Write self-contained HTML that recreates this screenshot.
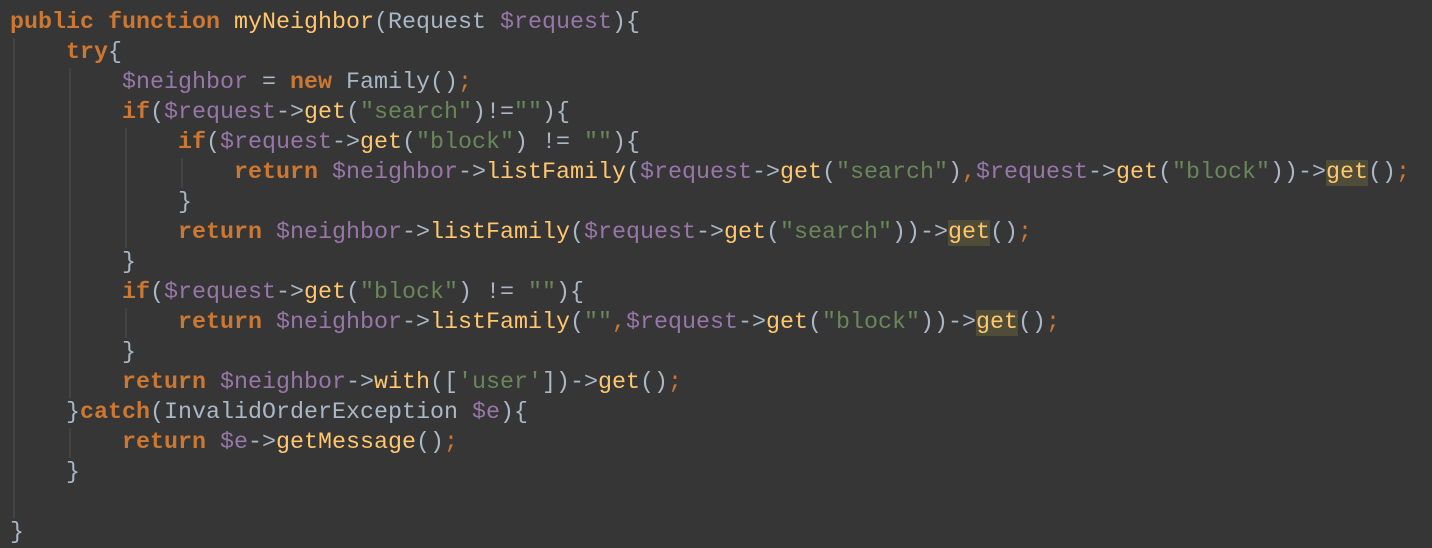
<!DOCTYPE html>
<html><head><meta charset="utf-8"><style>
html,body{margin:0;padding:0;background:#363636;width:1432px;height:548px;overflow:hidden}
pre{position:absolute;left:10px;top:8px;margin:0;font-family:"Liberation Mono",monospace;font-size:23.33px;line-height:30px;color:#a9b7c6;white-space:pre}
.k{color:#cc7832;font-weight:bold}
.f{color:#ffc66d}
.v{color:#9876aa}
.s{color:#6a8759}
.o{color:#cc7832}
.h{background:#4f4c38}
.g{position:absolute;width:2px;background:#434343}
</style></head><body>
<div class="g" style="left:13px;top:38px;height:480px"></div>
<div class="g" style="left:69px;top:68px;height:330px"></div>
<div class="g" style="left:69px;top:428px;height:30px"></div>
<div class="g" style="left:125px;top:128px;height:120px"></div>
<div class="g" style="left:125px;top:308px;height:30px"></div>
<div class="g" style="left:181px;top:158px;height:30px"></div>
<pre><span class="k">public function </span><span class="f">myNeighbor</span>(Request <span class="v">$request</span>){
    <span class="k">try</span>{
        <span class="v">$neighbor</span> = <span class="k">new </span>Family()<span class="o">;</span>
        <span class="k">if</span>(<span class="v">$request</span>-&gt;<span class="f">get</span>(<span class="s">"search"</span>)!=<span class="s">""</span>){
            <span class="k">if</span>(<span class="v">$request</span>-&gt;<span class="f">get</span>(<span class="s">"block"</span>) != <span class="s">""</span>){
                <span class="k">return </span><span class="v">$neighbor</span>-&gt;<span class="f">listFamily</span>(<span class="v">$request</span>-&gt;<span class="f">get</span>(<span class="s">"search"</span>)<span class="o">,</span><span class="v">$request</span>-&gt;<span class="f">get</span>(<span class="s">"block"</span>))-&gt;<span class="f h">get</span>()<span class="o">;</span>
            }
            <span class="k">return </span><span class="v">$neighbor</span>-&gt;<span class="f">listFamily</span>(<span class="v">$request</span>-&gt;<span class="f">get</span>(<span class="s">"search"</span>))-&gt;<span class="f h">get</span>()<span class="o">;</span>
        }
        <span class="k">if</span>(<span class="v">$request</span>-&gt;<span class="f">get</span>(<span class="s">"block"</span>) != <span class="s">""</span>){
            <span class="k">return </span><span class="v">$neighbor</span>-&gt;<span class="f">listFamily</span>(<span class="s">""</span><span class="o">,</span><span class="v">$request</span>-&gt;<span class="f">get</span>(<span class="s">"block"</span>))-&gt;<span class="f h">get</span>()<span class="o">;</span>
        }
        <span class="k">return </span><span class="v">$neighbor</span>-&gt;<span class="f">with</span>([<span class="s">'user'</span>])-&gt;<span class="f">get</span>()<span class="o">;</span>
    }<span class="k">catch</span>(InvalidOrderException <span class="v">$e</span>){
        <span class="k">return </span><span class="v">$e</span>-&gt;<span class="f">getMessage</span>()<span class="o">;</span>
    }

}</pre>
</body></html>
